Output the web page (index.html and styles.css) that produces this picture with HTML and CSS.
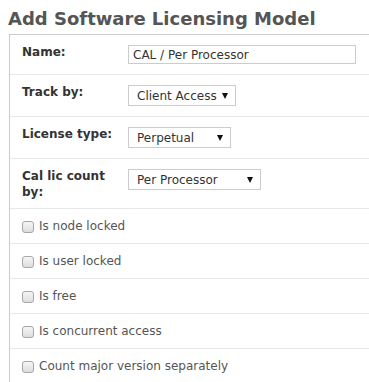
FILE: index.html
```html
<!DOCTYPE html>
<html lang="en">
<head>
    <meta charset="UTF-8">
    <meta name="viewport" content="width=device-width, initial-scale=1.0">
    <title>Add Software Licensing Model</title>
    <link rel="stylesheet" href="styles.css">
</head>
<body>
    <h1 class="page-title">Add Software Licensing Model</h1>

    <div class="panel">
        <div class="field-row">
            <label class="field-label" for="name">Name:</label>
            <input type="text" id="name" class="text-input" value="CAL / Per Processor">
        </div>

        <div class="field-row">
            <label class="field-label" for="trackBy">Track by:</label>
            <div class="select-wrap">
                <select id="trackBy" class="select-box select-track">
                    <option>Client Access</option>
                </select>
            </div>
        </div>

        <div class="field-row">
            <label class="field-label" for="licenseType">License type:</label>
            <div class="select-wrap">
                <select id="licenseType" class="select-box select-type">
                    <option>Perpetual</option>
                </select>
            </div>
        </div>

        <div class="field-row">
            <label class="field-label" for="calCount">Cal lic count by:</label>
            <div class="select-wrap">
                <select id="calCount" class="select-box select-count">
                    <option>Per Processor</option>
                </select>
            </div>
        </div>

        <div class="check-row">
            <label><input type="checkbox" class="check"> Is node locked</label>
        </div>
        <div class="check-row">
            <label><input type="checkbox" class="check"> Is user locked</label>
        </div>
        <div class="check-row">
            <label><input type="checkbox" class="check"> Is free</label>
        </div>
        <div class="check-row">
            <label><input type="checkbox" class="check"> Is concurrent access</label>
        </div>
        <div class="check-row">
            <label><input type="checkbox" class="check"> Count major version separately</label>
        </div>
    </div>
</body>
</html>
```

FILE: styles.css
```css
:root {
  --title-color: #555555;
  --label-color: #333333;
  --text-color: #555555;
  --panel-border: #cccccc;
  --row-border: #e8e8e8;
  --input-border: #cccccc;
}

body {
  font-family: 'DejaVu Sans', Verdana, sans-serif;
  font-size: 12px;
  background-color: white;
  color: var(--text-color);
  margin: 0;
  padding: 0;
  overflow: hidden;
}

.page-title {
  font-size: 18px;
  line-height: 22px;
  font-weight: bold;
  color: var(--title-color);
  margin: 8px 0 4px 8px;
}

.panel {
  margin: 0 -20px 0 9px;
  border-top: 1px solid var(--panel-border);
  border-left: 1px solid var(--panel-border);
  padding-bottom: 40px;
}

.field-row {
  display: flex;
  align-items: flex-start;
  padding: 10px 0 8px 12px;
  border-bottom: 1px solid var(--row-border);
}

.field-label {
  flex: none;
  width: 98px;
  padding-right: 8px;
  line-height: 15.5px;
  font-weight: bold;
  color: var(--label-color);
}

.text-input {
  box-sizing: border-box;
  width: 228px;
  height: 19px;
  margin: 0 0 2px 0;
  padding: 0 4px;
  border: 1px solid var(--input-border);
  font-family: inherit;
  font-size: 12px;
  color: var(--label-color);
}

.select-wrap {
  position: relative;
  margin-bottom: 2px;
}

.select-wrap::after {
  content: '';
  position: absolute;
  top: 8px;
  right: 8px;
  border-left: 3px solid transparent;
  border-right: 3px solid transparent;
  border-top: 6px solid #111111;
  pointer-events: none;
}

.select-box {
  -webkit-appearance: none;
  appearance: none;
  box-sizing: border-box;
  display: block;
  height: 21px;
  margin: 0;
  padding: 0 0 0 8px;
  border: 1px solid var(--input-border);
  border-radius: 0;
  background-color: white;
  font-family: inherit;
  font-size: 12px;
  color: var(--label-color);
}

.select-track {
  width: 108px;
}

.select-type {
  width: 103px;
}

.select-count {
  width: 133px;
}

.check-row {
  padding: 9px 0 9px 12px;
  line-height: 16px;
  border-bottom: 1px solid var(--row-border);
}

.check-row label {
  display: flex;
  align-items: center;
}

.check {
  -webkit-appearance: none;
  appearance: none;
  flex: none;
  width: 12px;
  height: 12px;
  margin: 2px 5px 0 0;
  border: 1px solid #a6a6a6;
  border-radius: 3px;
  background: linear-gradient(#f6f6f6, #dddddd);
}
```
